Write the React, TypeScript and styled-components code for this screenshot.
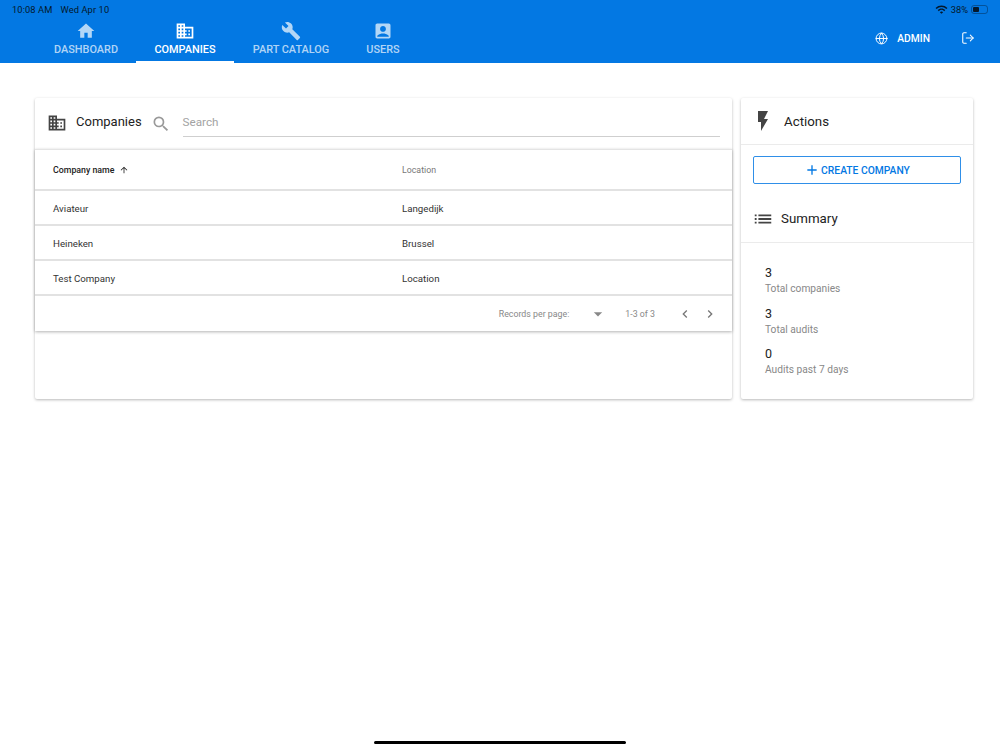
import styled, { createGlobalStyle } from 'styled-components';
import {
  MdAccountBox,
  MdAdd,
  MdArrowDropDown,
  MdArrowUpward,
  MdBuild,
  MdChevronLeft,
  MdChevronRight,
  MdDomain,
  MdFlashOn,
  MdHome,
  MdList,
  MdSearch,
  MdWifi,
} from 'react-icons/md';
import { Globe, LogOut } from 'lucide-react';

const GlobalStyle = createGlobalStyle`
  html, body {
    margin: 0;
    padding: 0;
    background: #fff;
    font-family: Roboto, "Liberation Sans", sans-serif;
  }
  * { box-sizing: border-box; }
`;

const tabs = [
  { label: 'DASHBOARD', icon: <MdHome />, width: 100 },
  { label: 'COMPANIES', icon: <MdDomain />, width: 98, active: true },
  { label: 'PART CATALOG', icon: <MdBuild />, width: 114 },
  { label: 'USERS', icon: <MdAccountBox />, width: 70 },
];

const companies = [
  { name: 'Aviateur', location: 'Langedijk' },
  { name: 'Heineken', location: 'Brussel' },
  { name: 'Test Company', location: 'Location' },
];

const stats = [
  { value: '3', label: 'Total companies' },
  { value: '3', label: 'Total audits' },
  { value: '0', label: 'Audits past 7 days' },
];

export default function App() {
  return (
    <Page>
      <GlobalStyle />
      <Header>
        <StatusBar>
          <StatusTime>10:08 AM</StatusTime>
          <StatusTime>Wed Apr 10</StatusTime>
          <StatusRight>
            <MdWifi size={13} />
            <span>38%</span>
            <Battery>
              <BatteryFill />
            </Battery>
          </StatusRight>
        </StatusBar>
        <NavRow>
          <Tabs>
            {tabs.map((tab) => (
              <Tab key={tab.label} $active={tab.active} $width={tab.width}>
                <TabIcon>{tab.icon}</TabIcon>
                {tab.label}
              </Tab>
            ))}
          </Tabs>
          <UserArea>
            <Globe size={13} strokeWidth={1.8} />
            <UserName>ADMIN</UserName>
            <LogoutIcon>
              <LogOut size={14} strokeWidth={1.8} />
            </LogoutIcon>
          </UserArea>
        </NavRow>
      </Header>

      <Main>
        <ListCard>
          <ListHead>
            <CardIcon>
              <MdDomain size={20} />
            </CardIcon>
            <ListTitle>Companies</ListTitle>
            <SearchIcon>
              <MdSearch size={20} />
            </SearchIcon>
            <SearchField>Search</SearchField>
          </ListHead>
          <Table>
            <HeadRow>
              <NameCol>
                <SortLabel>
                  Company name
                  <MdArrowUpward size={10} />
                </SortLabel>
              </NameCol>
              <LocationHead>Location</LocationHead>
            </HeadRow>
            {companies.map((company) => (
              <BodyRow key={company.name}>
                <NameCol>{company.name}</NameCol>
                <div>{company.location}</div>
              </BodyRow>
            ))}
            <Pager>
              <PagerLabel>Records per page:</PagerLabel>
              <PagerSelect>
                <MdArrowDropDown size={20} />
              </PagerSelect>
              <PagerRange>1-3 of 3</PagerRange>
              <PagerButtons>
                <MdChevronLeft size={16} />
                <MdChevronRight size={16} />
              </PagerButtons>
            </Pager>
          </Table>
        </ListCard>

        <SideCard>
          <ActionsHead>
            <MdFlashOn size={24} />
            <SideTitle>Actions</SideTitle>
          </ActionsHead>
          <ActionBody>
            <CreateButton>
              <MdAdd size={16} />
              CREATE COMPANY
            </CreateButton>
          </ActionBody>
          <SummaryHead>
            <MdList size={22} />
            <SideTitle>Summary</SideTitle>
          </SummaryHead>
          <Stats>
            {stats.map((stat) => (
              <Stat key={stat.label}>
                <StatValue>{stat.value}</StatValue>
                <StatLabel>{stat.label}</StatLabel>
              </Stat>
            ))}
          </Stats>
        </SideCard>
      </Main>
      <HomeIndicator />
    </Page>
  );
}

const Page = styled.div`
  min-height: 750px;
  background: #fff;
`;

const Header = styled.header`
  height: 63px;
  background: #0378e3;
  color: #fff;
`;

const StatusBar = styled.div`
  height: 18px;
  padding: 0 12px;
  display: flex;
  align-items: center;
  gap: 8px;
  font-size: 9.3px;
  color: #04182c;
`;

const StatusTime = styled.span`
  letter-spacing: 0.1px;
`;

const StatusRight = styled.div`
  margin-left: auto;
  display: flex;
  align-items: center;
  gap: 3px;
`;

const Battery = styled.div`
  width: 17px;
  height: 9px;
  border: 1px solid rgba(4, 24, 44, 0.4);
  border-radius: 3px;
  padding: 1px;
`;

const BatteryFill = styled.div`
  width: 6px;
  height: 100%;
  border-radius: 1px;
  background: #04182c;
`;

const NavRow = styled.div`
  height: 45px;
  padding-left: 36px;
  display: flex;
  justify-content: space-between;
`;

const Tabs = styled.nav`
  display: flex;
`;

const Tab = styled.div<{ $active?: boolean; $width: number }>`
  width: ${(props) => props.$width}px;
  padding-top: 1px;
  display: flex;
  flex-direction: column;
  align-items: center;
  font-size: 10.9px;
  font-weight: 500;
  line-height: 14px;
  white-space: nowrap;
  color: ${(props) => (props.$active ? '#fff' : 'rgba(255, 255, 255, 0.7)')};
  border-bottom: 2px solid ${(props) => (props.$active ? '#fff' : 'transparent')};
`;

const TabIcon = styled.div`
  height: 24px;
  font-size: 20px;
  display: flex;
  align-items: center;
`;

const UserArea = styled.div`
  height: 40px;
  padding-right: 25px;
  display: flex;
  align-items: center;
`;

const UserName = styled.span`
  margin-left: 9px;
  font-size: 10.3px;
  font-weight: 500;
`;

const LogoutIcon = styled.div`
  margin-left: 31px;
  display: flex;
`;

const Main = styled.main`
  padding: 35px 27px 0 35px;
  display: grid;
  grid-template-columns: 697px 232px;
  gap: 9px;
`;

const Card = styled.section`
  height: 301px;
  background: #fff;
  border-radius: 2px;
  box-shadow: 0 1px 3px rgba(0, 0, 0, 0.28);
`;

const ListCard = styled(Card)``;

const SideCard = styled(Card)`
  color: #444;
`;

const ListHead = styled.div`
  height: 51px;
  padding: 0 12px;
  display: flex;
  align-items: center;
`;

const CardIcon = styled.div`
  width: 20px;
  margin-bottom: 2px;
  color: #444;
  display: flex;
`;

const ListTitle = styled.div`
  margin: 0 0 5px 9px;
  font-size: 13px;
  color: #222;
`;

const SearchIcon = styled.div`
  margin-left: 9px;
  color: #999;
  display: flex;
`;

const SearchField = styled.div`
  flex: 1;
  margin-left: 12px;
  height: 27px;
  line-height: 25px;
  font-size: 11.7px;
  color: #a3a3a3;
  border-bottom: 1px solid #cfcfcf;
`;

const Table = styled.div`
  height: 182px;
  box-shadow: 0 1px 3px rgba(0, 0, 0, 0.3);
  border-top: 1px solid #e4e4e4;
  font-size: 9.7px;
  color: #333;
`;

const Row = styled.div`
  padding-left: 18px;
  display: grid;
  grid-template-columns: 349px 1fr;
  align-items: center;
  border-bottom: 2px solid #e2e2e2;
`;

const HeadRow = styled(Row)`
  height: 41px;
`;

const BodyRow = styled(Row)`
  height: 35px;
  padding-top: 2px;
`;

const NameCol = styled.div`
  color: #333;
`;

const SortLabel = styled.div`
  display: flex;
  align-items: center;
  gap: 4px;
  font-size: 8.8px;
  font-weight: 500;
  color: #222;
`;

const LocationHead = styled.div`
  font-size: 8.8px;
  color: #777;
`;

const Pager = styled.div`
  height: 35px;
  padding-right: 14px;
  display: flex;
  align-items: center;
  justify-content: flex-end;
  font-size: 8.8px;
  color: #888;
`;

const PagerLabel = styled.span``;

const PagerSelect = styled.div`
  margin-left: 19px;
  display: flex;
  color: #888;
`;

const PagerRange = styled.span`
  margin-left: 17px;
`;

const PagerButtons = styled.div`
  margin-left: 22px;
  display: flex;
  gap: 9px;
  color: #777;
`;

const ActionsHead = styled.div`
  height: 47px;
  padding-left: 10px;
  display: flex;
  align-items: center;
  gap: 9px;
  border-bottom: 1px solid #ebebeb;
`;

const SideTitle = styled.div`
  font-size: 13.3px;
  color: #222;
`;

const ActionBody = styled.div`
  padding: 11px 12px 0;
`;

const CreateButton = styled.button`
  width: 100%;
  height: 28px;
  padding: 0;
  display: flex;
  align-items: center;
  justify-content: center;
  gap: 1px;
  background: #fff;
  border: 1px solid #2f8fe8;
  border-radius: 2px;
  color: #0378e3;
  font-family: inherit;
  font-size: 10.3px;
  font-weight: 500;
`;

const SummaryHead = styled.div`
  height: 59px;
  padding: 11px 0 0 11px;
  display: flex;
  align-items: center;
  gap: 7px;
  border-bottom: 1px solid #ebebeb;
`;

const Stats = styled.div`
  padding: 23px 24px 0;
  display: flex;
  flex-direction: column;
  gap: 8.5px;
`;

const Stat = styled.div``;

const StatValue = styled.div`
  font-size: 12.5px;
  line-height: 13px;
  color: #222;
`;

const StatLabel = styled.div`
  font-size: 10.2px;
  line-height: 19px;
  color: #888;
`;

const HomeIndicator = styled.div`
  position: fixed;
  left: 374px;
  top: 741px;
  width: 252px;
  height: 3px;
  border-radius: 2px;
  background: #000;
`;
